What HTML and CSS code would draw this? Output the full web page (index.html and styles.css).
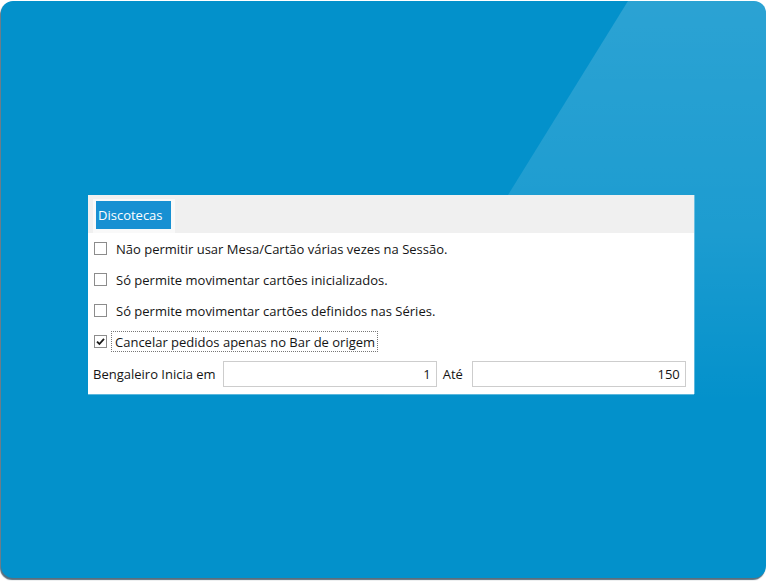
FILE: index.html
```html
<!doctype html>
<html lang="pt">
  <head>
    <meta charset="UTF-8" />
    <meta name="viewport" content="width=device-width, initial-scale=1.0" />
    <title>Discotecas</title>
    <link rel="stylesheet" href="styles.css">
  </head>
  <body>
    <div class="screen">
      <!-- Light diagonal wedge on the desktop background -->
      <div class="glare"></div>

      <div class="panel">
        <div class="tabs">
          <div class="tab">
            <span class="tab-label">Discotecas</span>
          </div>
        </div>

        <div class="panel-body">
          <label class="opt">
            <span class="box"></span>
            <span>Não permitir usar Mesa/Cartão várias vezes na Sessão.</span>
          </label>
          <label class="opt">
            <span class="box"></span>
            <span>Só permite movimentar cartões inicializados.</span>
          </label>
          <label class="opt">
            <span class="box"></span>
            <span>Só permite movimentar cartões definidos nas Séries.</span>
          </label>
          <label class="opt">
            <span class="box">
              <svg width="11" height="11" viewBox="0 0 11 11">
                <path d="M2 5.6 L4.4 8 L9 2.8" fill="none" stroke="#1a1a1a" stroke-width="1.8" />
              </svg>
            </span>
            <span class="focused">Cancelar pedidos apenas no Bar de origem</span>
          </label>

          <div class="range">
            <span class="range-label">Bengaleiro Inicia em</span>
            <div class="field">1</div>
            <span class="range-label">Até</span>
            <div class="field">150</div>
          </div>
        </div>
      </div>
    </div>
  </body>
</html>
```

FILE: styles.css
```css
* {
  margin: 0;
  padding: 0;
  box-sizing: border-box;
}

body {
  font-family: "Open Sans", "Noto Sans", sans-serif;
  background: #ffffff;
  width: 768px;
  height: 581px;
  overflow: hidden;
}

/* Blue desktop frame */
.screen {
  position: relative;
  margin: 1px 2px 0 1px;
  height: 577px;
  border-radius: 12px;
  background: #0391cb;
  box-shadow: -1px 2px 1px rgba(20, 50, 70, 0.7);
  overflow: hidden;
  padding: 194px 0 0 87px;
}

.glare {
  position: absolute;
  top: 0;
  left: 0;
  width: 100%;
  height: 100%;
  background: linear-gradient(180deg, rgba(255, 255, 255, 0.16) 0%, rgba(255, 255, 255, 0.1) 40%, rgba(255, 255, 255, 0) 70%);
  clip-path: polygon(627px 0, 100% 0, 100% 100%, 270px 100%);
}

.panel {
  position: relative;
  width: 606px;
  height: 199px;
  background: #ffffff;
  color: #141414;
  font-size: 13px;
  box-shadow: 0 1px 0 rgba(255, 255, 255, 0.35), 1px 0 0 rgba(255, 255, 255, 0.35);
}

.tabs {
  height: 38px;
  background: #f0f0f0;
  padding: 4px 0 0 5px;
}

.tab {
  width: 82px;
  height: 34px;
  background: #f9f9f9;
  padding: 2px 3px 0 3px;
}

.tab-label {
  display: block;
  width: 75px;
  height: 28px;
  line-height: 28px;
  background: #1790d2;
  color: #ffffff;
  font-size: 13px;
  padding-left: 2px;
}

.panel-body {
  padding: 0 6px 0 5px;
}

.opt {
  display: flex;
  align-items: center;
  gap: 9px;
  height: 31px;
}

.box {
  display: flex;
  align-items: center;
  justify-content: center;
  width: 13px;
  height: 13px;
  border: 1px solid #8c8c8c;
  background: #ffffff;
  margin-left: 1px;
}

.focused {
  border: 1px dotted #777;
  padding: 1px 2px 1px 3px;
  margin-left: -5px;
  height: 21px;
  line-height: 18px;
}

.range {
  display: flex;
  align-items: center;
  height: 26px;
  margin-top: 4px;
}

.range-label {
  padding: 0 6px 0 0;
}

.range-label:first-child {
  padding-right: 7px;
}

.range .field + .range-label {
  padding: 0 9px 0 6px;
}

.field {
  width: 214px;
  height: 26px;
  line-height: 24px;
  border: 1px solid #cdcdcd;
  text-align: right;
  padding-right: 5px;
}
```
